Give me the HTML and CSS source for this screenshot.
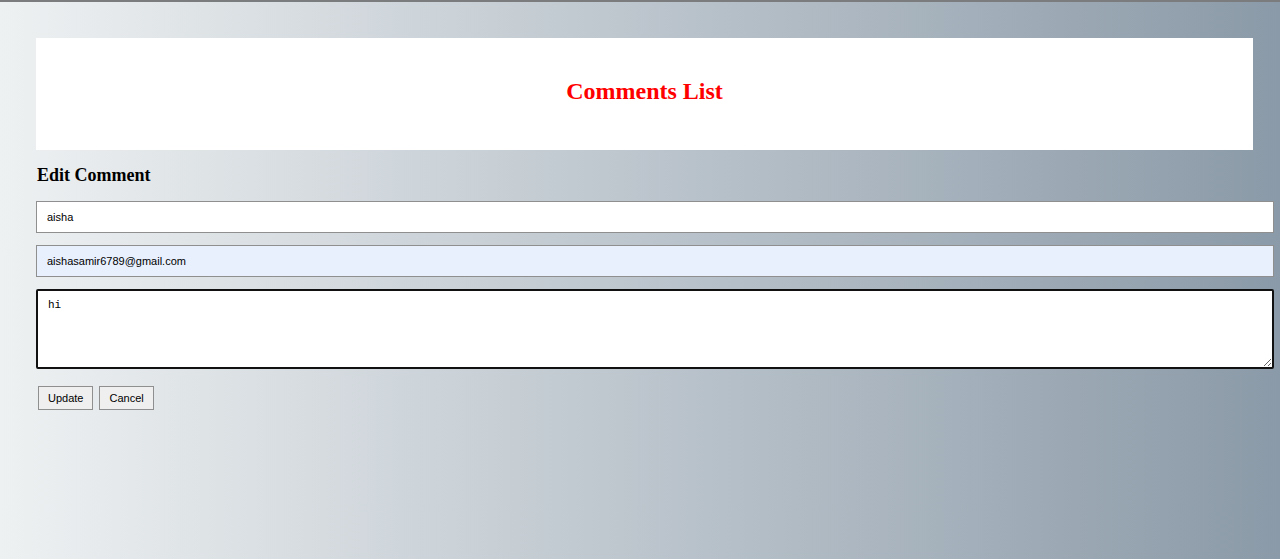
FILE: index.html
```html
<!DOCTYPE html>
<html>
<head>
<meta charset="utf-8">
<link rel="stylesheet" href="styles.css">
</head>
<body>
<div class="page">
  <header class="banner">
    <h1 class="title">Comments List</h1>
  </header>
  <section class="edit">
    <h3 class="edit-title">Edit Comment</h3>
    <input class="field" type="text" value="aisha">
    <input class="field field-auto" type="email" value="aishasamir6789@gmail.com">
    <textarea class="field area">hi</textarea>
    <div class="actions">
      <button class="btn">Update</button>
      <button class="btn">Cancel</button>
    </div>
  </section>
</div>
</body>
</html>
```
FILE: styles.css
```css
html, body {
  margin: 0;
  height: 100%;
}
body {
  border-top: 2px solid #7a7c7e;
  box-sizing: border-box;
  background: linear-gradient(to right, #eef1f2, #8b9aa8);
  font-family: "Liberation Serif", serif;
}
.page {
  padding: 36px 27px 0 36px;
}
.banner {
  background: #fff;
  height: 112px;
  display: flex;
  align-items: center;
  justify-content: center;
}
.title {
  margin: 0;
  color: #ff0000;
  font-size: 24px;
  font-weight: bold;
  padding-bottom: 6px;
}
.edit {
  display: flex;
  flex-direction: column;
  align-items: flex-start;
}
.edit-title {
  margin: 15px 0 15px 1px;
  font-size: 18px;
  font-weight: bold;
}
.field {
  height: 32px;
  padding: 0 10px;
  margin: 0 0 12px 0;
  border: 1px solid #8f8f8f;
  background: #fff;
  font-family: "Liberation Sans", Arial, sans-serif;
  font-size: 11px;
  color: #000;
  box-sizing: border-box;
  width: calc(100% + 21px);
}
.field-auto {
  background: #e8f0fe;
}
.area {
  height: 80px;
  padding: 8px 10px;
  border: 2px solid #111;
  border-radius: 2px;
  font-family: "Liberation Mono", monospace;
  font-size: 11px;
  resize: vertical;
  margin-bottom: 17px;
}
.actions {
  display: flex;
  gap: 6px;
  padding-left: 2px;
}
.btn {
  height: 24px;
  padding: 0 9px;
  border: 1px solid #8f8f8f;
  background: #efefef;
  font-family: "Liberation Sans", Arial, sans-serif;
  font-size: 11px;
  color: #000;
}
```
